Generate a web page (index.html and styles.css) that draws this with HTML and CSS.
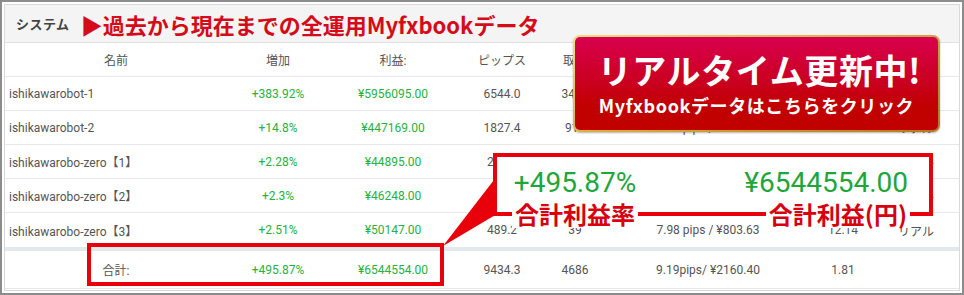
FILE: index.html
```html
<!DOCTYPE html>
<html lang="ja">
<head>
<meta charset="utf-8">
<title>システム</title>
<link rel="stylesheet" href="styles.css">
</head>
<body>
<div class="frame">
  <div class="panel">
    <div class="sys-header">
      <span class="sys-label">システム</span>
      <span class="sys-title">▶過去から現在までの全運用Myfxbookデータ</span>
    </div>
    <div class="tbl">
      <div class="tr th">
        <div class="c name-h">名前</div><div class="c">増加</div><div class="c">利益:</div><div class="c">ピップス</div><div class="c">取引</div><div class="c">平均取引</div><div class="c">PF</div><div class="c">タイプ</div>
      </div>
      <div class="tr">
        <div class="c name">ishikawarobot-1</div><div class="c pos">+383.92%</div><div class="c pos">¥5956095.00</div><div class="c">6544.0</div><div class="c">3456</div><div class="c">1.89 pips / ¥1723.47</div><div class="c">1.58</div><div class="c">リアル</div>
      </div>
      <div class="tr">
        <div class="c name">ishikawarobot-2</div><div class="c pos">+14.8%</div><div class="c pos">¥447169.00</div><div class="c">1827.4</div><div class="c">912</div><div class="c">2.00 pips / ¥490.32</div><div class="c">1.42</div><div class="c">リアル</div>
      </div>
      <div class="tr">
        <div class="c name">ishikawarobo-zero【1】</div><div class="c pos">+2.28%</div><div class="c pos">¥44895.00</div><div class="c">286.3</div><div class="c">41</div><div class="c">6.98 pips / ¥1095.00</div><div class="c">9.21</div><div class="c">リアル</div>
      </div>
      <div class="tr">
        <div class="c name">ishikawarobo-zero【2】</div><div class="c pos">+2.3%</div><div class="c pos">¥46248.00</div><div class="c">283.7</div><div class="c">40</div><div class="c">7.09 pips / ¥1156.20</div><div class="c">10.32</div><div class="c">リアル</div>
      </div>
      <div class="tr">
        <div class="c name">ishikawarobo-zero【3】</div><div class="c pos">+2.51%</div><div class="c pos">¥50147.00</div><div class="c">489.2</div><div class="c">39</div><div class="c">7.98 pips / ¥803.63</div><div class="c">12.14</div><div class="c">リアル</div>
      </div>
      <div class="tr total">
        <div class="c name-h">合計:</div><div class="c pos">+495.87%</div><div class="c pos">¥6544554.00</div><div class="c">9434.3</div><div class="c">4686</div><div class="c">9.19pips/ ¥2160.40</div><div class="c">1.81</div><div class="c"></div>
      </div>
    </div>
  </div>

  <a class="banner" href="#">
    <span class="banner-inner">
      <span class="banner-main">リアルタイム更新中!</span>
      <span class="banner-sub">Myfxbookデータはこちらをクリック</span>
    </span>
  </a>

  <div class="total-box"></div>
  <svg class="pointer" width="62" height="80" viewBox="0 0 62 80">
    <polygon points="59,4 59,42 5,74" fill="#e8000b"/>
  </svg>

  <div class="callout">
    <div class="stat stat-left">
      <span class="stat-value">+495.87%</span>
      <span class="stat-label">合計利益率</span>
    </div>
    <div class="stat stat-right">
      <span class="stat-value">¥6544554.00</span>
      <span class="stat-label">合計利益(円)</span>
    </div>
  </div>
</div>
</body>
</html>
```

FILE: styles.css
```css
html, body {
  margin: 0;
  padding: 0;
  background: #ffffff;
}

.frame {
  position: relative;
  width: 964px;
  height: 295px;
  box-sizing: border-box;
  border: 2px solid #8c8c8c;
  padding: 2px;
  background: #ffffff;
  overflow: hidden;
  font-family: Roboto, "Noto Sans CJK JP", sans-serif;
}

.panel {
  height: 100%;
  box-sizing: border-box;
  border: 1px solid #d9d9d9;
  background: #ffffff;
}

.sys-header {
  height: 37px;
  border-bottom: 1px solid #e2e2e2;
  background: #f4f4f4;
  display: flex;
  align-items: center;
  padding-left: 11px;
}

.sys-label {
  font-family: "Noto Sans CJK JP", sans-serif;
  font-size: 13px;
  font-weight: 700;
  color: #444444;
  letter-spacing: 0.5px;
  margin-right: 11px;
}

.sys-title {
  font-family: "Noto Sans CJK JP", sans-serif;
  font-size: 22px;
  font-weight: 700;
  color: #d40b1a;
  letter-spacing: 0;
  line-height: 1;
}

.tbl {
  display: flex;
  flex-direction: column;
}

.tr {
  display: grid;
  grid-template-columns: 222px 102px 128px 90px 56px 210px 60px 86px;
  height: 34px;
  box-sizing: border-box;
  border-bottom: 1px solid #e5e9ee;
  align-items: center;
  font-size: 12px;
  color: #555555;
}

.tr:nth-child(6) {
  border-bottom: none;
}

.th {
  color: #555555;
}

.c {
  text-align: center;
  white-space: nowrap;
  overflow: hidden;
}

.c.name {
  text-align: left;
  padding-left: 4px;
}

.c.name-h {
  text-align: center;
}

.pos {
  color: #25b143;
}

.tr.total {
  border-top: 4px solid #e3e8ed;
  height: 42px;
}

/* banner overlay */
.banner {
  position: absolute;
  left: 571px;
  top: 33px;
  width: 367px;
  height: 97px;
  box-sizing: border-box;
  padding: 2px;
  border-radius: 7px;
  background: linear-gradient(160deg, #f3dc86 0%, #d8ad4c 45%, #b27a22 100%);
  box-shadow: 0 1px 2px rgba(60, 30, 0, 0.35);
  text-decoration: none;
  display: block;
}

.banner-inner {
  display: flex;
  flex-direction: column;
  align-items: center;
  height: 100%;
  box-sizing: border-box;
  border-radius: 5px;
  background: linear-gradient(to bottom, #d8004e 0%, #c9001e 50%, #c10000 75%, #c10000 100%);
  padding-top: 13px;
  font-family: "Noto Sans CJK JP", sans-serif;
  font-weight: 700;
  color: #ffffff;
}

.banner-main {
  font-size: 34px;
  line-height: 40px;
  letter-spacing: 0.6px;
  margin-left: 6px;
}

.banner-sub {
  font-size: 18px;
  line-height: 22px;
  margin-top: 4px;
  letter-spacing: 0.6px;
}

/* highlight overlays */
.total-box {
  position: absolute;
  left: 85px;
  top: 241px;
  width: 357px;
  height: 43px;
  box-sizing: border-box;
  border: 4px solid #e8000b;
}

.pointer {
  position: absolute;
  left: 436px;
  top: 170px;
}

.callout {
  position: absolute;
  left: 491px;
  top: 151px;
  width: 440px;
  height: 63px;
  box-sizing: border-box;
  border: 4px solid #e8000b;
  background: #ffffff;
  display: flex;
  justify-content: space-between;
  align-items: flex-start;
  padding: 10px 19px 0 15px;
}

.stat {
  display: flex;
  flex-direction: column;
}

.stat-left {
  align-items: center;
}

.stat-right {
  align-items: flex-end;
}

.stat-value {
  font-family: Roboto, sans-serif;
  font-size: 28px;
  line-height: 32px;
  color: #1fa63b;
}

.stat-right .stat-value {
  margin-right: 2px;
}

.stat-label {
  margin-top: 1px;
  padding: 0 3px;
  background: #ffffff;
  font-family: "Noto Sans CJK JP", sans-serif;
  font-size: 24px;
  line-height: 28px;
  font-weight: 700;
  color: #d6000f;
}
```
